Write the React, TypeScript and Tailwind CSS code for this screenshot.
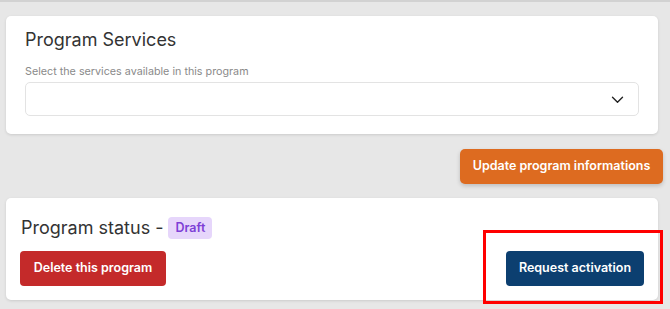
import React from "react";

export default function App() {
  return (
    <div
      className="relative w-[670px] h-[309px] overflow-hidden bg-[#e7e7e7] border-t-2 border-[#d2d2d2] pl-[6px] pr-[12px] pt-[14px]"
      style={{ fontFamily: "Inter, 'Noto Sans', sans-serif" }}
    >
      {/* Program Services card */}
      <div className="bg-white rounded-[5px] shadow-[0_1px_3px_rgba(0,0,0,0.12)] px-[19px] pt-[13px] pb-[18px]">
        <h2 className="text-[18px] leading-[22px] text-[#333333] font-normal">Program Services</h2>
        <p className="mt-[14px] text-[10.75px] leading-[13px] text-[#8a8a8a]">
          Select the services available in this program
        </p>
        <div className="mt-[4px] h-[34px] rounded-[5px] border border-[#e3e3e3] flex items-center justify-end pr-[13px]">
          <svg width="15" height="15" viewBox="0 0 24 24" fill="none" stroke="#222" strokeWidth="2.2" strokeLinecap="round" strokeLinejoin="round">
            <path d="M4 8.5l8 8 8-8" />
          </svg>
        </div>
      </div>

      {/* Update button */}
      <div className="flex justify-end mt-[15px] mr-[-5px]">
        <button className="h-[35px] w-[203px] rounded-[5px] bg-[#dd6b20] text-white text-[12.5px] font-semibold shadow-[0_2px_4px_rgba(0,0,0,0.18)]">
          Update program informations
        </button>
      </div>

      {/* Program status card */}
      <div className="mt-[14px] bg-white rounded-[5px] shadow-[0_1px_3px_rgba(0,0,0,0.12)] px-[14px] pt-[19px] pb-[14px]">
        <div className="flex items-center h-[22px]">
          <span className="text-[18px] leading-[22px] text-[#333333] ml-[1px]">Program status -</span>
          <span className="ml-[5px] h-[22px] px-[7px] flex items-center rounded-[4px] bg-[#e6d6fb] text-[#7e3fd6] text-[12.5px] font-semibold">
            Draft
          </span>
        </div>
        <div className="mt-[12px] flex justify-between items-center">
          <button className="h-[35px] w-[146px] rounded-[4px] bg-[#c42a2a] text-white text-[12.5px] font-semibold">
            Delete this program
          </button>
          <button className="h-[35px] w-[138px] rounded-[4px] bg-[#0c3f70] text-white text-[12.5px] font-semibold">
            Request activation
          </button>
        </div>
      </div>

      {/* Annotation */}
      <div className="absolute left-[483px] top-[228px] w-[180px] h-[74px] border-[3px] border-[#ff0000] pointer-events-none" />
    </div>
  );
}
